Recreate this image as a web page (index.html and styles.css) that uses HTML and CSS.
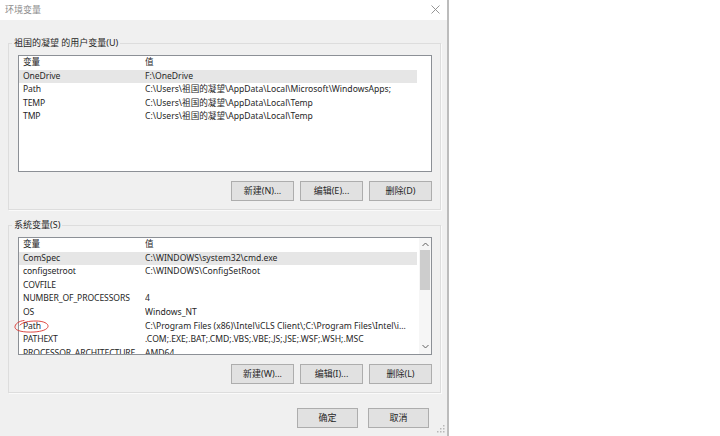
FILE: index.html
```html
<!DOCTYPE html>
<html lang="zh-CN">
<head>
<meta charset="utf-8">
<title>环境变量</title>
<link rel="stylesheet" href="styles.css">
</head>
<body>
<div class="dialog">
  <div class="titlebar">
    <span class="title">环境变量</span>
    <svg class="close" width="9" height="9" viewBox="0 0 9 9"><path d="M0.5 0.5L8.5 8.5M8.5 0.5L0.5 8.5" stroke="#8a8a8a" stroke-width="0.9" fill="none"/></svg>
  </div>
  <div class="content">
    <fieldset class="group">
      <legend>祖国的凝望 的用户变量(U)</legend>
      <div class="list list-user">
        <div class="rows">
          <div class="row"><span class="c1">变量</span><span class="c2">值</span></div>
          <div class="row sel"><span class="c1">OneDrive</span><span class="c2">F:\OneDrive</span></div>
          <div class="row"><span class="c1">Path</span><span class="c2">C:\Users\祖国的凝望\AppData\Local\Microsoft\WindowsApps;</span></div>
          <div class="row"><span class="c1">TEMP</span><span class="c2">C:\Users\祖国的凝望\AppData\Local\Temp</span></div>
          <div class="row"><span class="c1">TMP</span><span class="c2">C:\Users\祖国的凝望\AppData\Local\Temp</span></div>
        </div>
      </div>
      <div class="buttons">
        <button class="btn">新建(N)...</button>
        <button class="btn">编辑(E)...</button>
        <button class="btn">删除(D)</button>
      </div>
    </fieldset>
    <fieldset class="group group-sys">
      <legend>系统变量(S)</legend>
      <div class="list-wrap">
        <div class="list list-sys">
          <div class="rows">
            <div class="row"><span class="c1">变量</span><span class="c2">值</span></div>
            <div class="row sel"><span class="c1">ComSpec</span><span class="c2">C:\WINDOWS\system32\cmd.exe</span></div>
            <div class="row"><span class="c1">configsetroot</span><span class="c2">C:\WINDOWS\ConfigSetRoot</span></div>
            <div class="row"><span class="c1">COVFILE</span><span class="c2"></span></div>
            <div class="row"><span class="c1">NUMBER_OF_PROCESSORS</span><span class="c2">4</span></div>
            <div class="row"><span class="c1">OS</span><span class="c2">Windows_NT</span></div>
            <div class="row"><span class="c1">Path</span><span class="c2">C:\Program Files (x86)\Intel\iCLS Client\;C:\Program Files\Intel\iCLS Client\;C:\WINDOWS\system32</span></div>
            <div class="row"><span class="c1">PATHEXT</span><span class="c2">.COM;.EXE;.BAT;.CMD;.VBS;.VBE;.JS;.JSE;.WSF;.WSH;.MSC</span></div>
            <div class="row"><span class="c1">PROCESSOR_ARCHITECTURE</span><span class="c2">AMD64</span></div>
          </div>
          <div class="scrollbar">
            <svg class="arrow" width="7" height="5" viewBox="0 0 7 5"><path d="M0.5 4L3.5 1L6.5 4" stroke="#606060" stroke-width="1" fill="none"/></svg>
            <div class="track"><div class="thumb"></div></div>
            <svg class="arrow" width="7" height="5" viewBox="0 0 7 5"><path d="M0.5 1L3.5 4L6.5 1" stroke="#606060" stroke-width="1" fill="none"/></svg>
          </div>
        </div>
        <svg class="mark" width="40" height="18" viewBox="0 0 40 18"><path d="M11 2.5C6 3 1.5 6 2 9.5C2.5 13 11 14.5 21 14C29 13.5 34.5 11.5 35 8.5C35.5 5.5 30.5 3 23 3C16 3 10 4 7 7" stroke="#d9342f" stroke-width="0.9" fill="none" stroke-linecap="round"/></svg>
      </div>
      <div class="buttons">
        <button class="btn">新建(W)...</button>
        <button class="btn">编辑(I)...</button>
        <button class="btn">删除(L)</button>
      </div>
    </fieldset>
    <div class="footer">
      <button class="btn btn-ok">确定</button>
      <button class="btn btn-ok">取消</button>
    </div>
  </div>
  <svg class="grip" width="8" height="8" viewBox="0 0 8 8"><g fill="#b8b8b8"><rect x="6" y="0" width="1.5" height="1.5"/><rect x="3" y="3" width="1.5" height="1.5"/><rect x="6" y="3" width="1.5" height="1.5"/><rect x="0" y="6" width="1.5" height="1.5"/><rect x="3" y="6" width="1.5" height="1.5"/><rect x="6" y="6" width="1.5" height="1.5"/></g></svg>
</div>
</body>
</html>
```
FILE: styles.css
```css
html, body {
  margin: 0;
  padding: 0;
  background: #ffffff;
}

body {
  font-family: "Noto Sans", "Noto Sans CJK SC", sans-serif;
  font-size: 8.6px;
  color: #262626;
}

.dialog {
  position: relative;
  width: 447px;
  height: 436px;
  background: #f0f0f0;
  border-right: 2px solid #bcbcbc;
  display: flex;
  flex-direction: column;
  overflow: hidden;
}

.titlebar {
  height: 19px;
  flex: none;
  background: #ffffff;
  display: flex;
  align-items: center;
  justify-content: space-between;
  padding: 0 7px 1px 5px;
  color: #8c8c8c;
}

.title {
  font-size: 9px;
}

.content {
  padding: 17px 6px 0 8px;
  display: flex;
  flex-direction: column;
}

.group {
  margin: 0;
  padding: 6px 8px 8px 9px;
  border: 1px solid #dddddd;
  box-shadow: 1px 1px 0 #fafafa;
  min-width: 0;
}

.group-sys {
  margin-top: 9px;
}

.group legend {
  padding: 0 2px;
  margin-left: -6px;
  line-height: 12px;
  font-size: 9px;
  color: #262626;
}

.list-wrap {
  position: relative;
}

.list {
  height: 115px;
  border: 1px solid #8c9096;
  background: #ffffff;
  overflow: hidden;
  display: flex;
  justify-content: space-between;
}

.list-sys {
  height: 116px;
}

.rows {
  width: 398px;
  flex: none;
}

.row {
  display: flex;
  height: 13.6px;
  line-height: 13.6px;
  white-space: nowrap;
}

.row.sel {
  background: #e6e6e6;
}

.c1 {
  width: 122px;
  padding-left: 4px;
  flex: none;
  letter-spacing: -0.1px;
}

.c2 {
  width: 262px;
  flex: none;
  overflow: hidden;
  text-overflow: ellipsis;
}

.scrollbar {
  width: 12px;
  flex: none;
  background: #f6f6f6;
  display: flex;
  flex-direction: column;
  align-items: center;
}

.scrollbar .arrow {
  flex: none;
  margin: 4px 0 3px;
}

.scrollbar .arrow:last-child {
  margin: 3px 0 5px;
}

.track {
  flex: 1;
  width: 100%;
  padding: 0 1px;
  box-sizing: border-box;
}

.thumb {
  height: 40px;
  background: #cdcdcd;
}

.mark {
  position: absolute;
  left: -5px;
  top: 81px;
}

.buttons {
  display: flex;
  justify-content: flex-end;
  gap: 6px;
  margin-top: 9px;
}

.btn {
  width: 63px;
  height: 20px;
  padding: 0;
  border: 1px solid #adadad;
  background: #e1e1e1;
  font-family: "Noto Sans", "Noto Sans CJK SC", sans-serif;
  font-size: 9px;
  color: #262626;
  line-height: 18px;
}

.footer {
  display: flex;
  justify-content: flex-end;
  gap: 10px;
  margin-top: 15px;
  padding-right: 12px;
}

.btn-ok {
  width: 61px;
}

.grip {
  position: absolute;
  right: 2px;
  bottom: 3px;
}
```
